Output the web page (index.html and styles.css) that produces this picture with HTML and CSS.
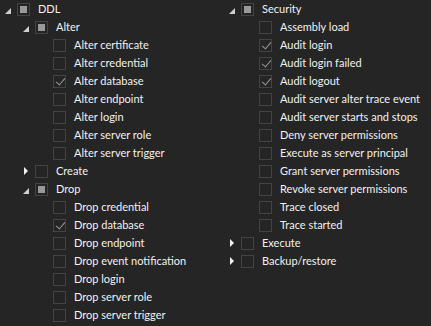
FILE: index.html
```html
<!DOCTYPE html>
<html lang="en">

<head>
    <meta charset="UTF-8">
    <title>Audit events</title>
    <link rel="stylesheet" href="styles.css">
</head>

<body>
    <div class="panel">
        <ul class="tree">
            <li>
                <div class="row"><span class="toggle open"></span><span class="box partial"></span><span class="label">DDL</span></div>
                <ul>
                    <li>
                        <div class="row"><span class="toggle open"></span><span class="box partial"></span><span class="label">Alter</span></div>
                        <ul>
                            <li class="row"><span class="toggle"></span><span class="box"></span><span class="label">Alter certificate</span></li>
                            <li class="row"><span class="toggle"></span><span class="box"></span><span class="label">Alter credential</span></li>
                            <li class="row"><span class="toggle"></span><span class="box checked"></span><span class="label">Alter database</span></li>
                            <li class="row"><span class="toggle"></span><span class="box"></span><span class="label">Alter endpoint</span></li>
                            <li class="row"><span class="toggle"></span><span class="box"></span><span class="label">Alter login</span></li>
                            <li class="row"><span class="toggle"></span><span class="box"></span><span class="label">Alter server role</span></li>
                            <li class="row"><span class="toggle"></span><span class="box"></span><span class="label">Alter server trigger</span></li>
                        </ul>
                    </li>
                    <li class="row"><span class="toggle closed"></span><span class="box"></span><span class="label">Create</span></li>
                    <li>
                        <div class="row"><span class="toggle open"></span><span class="box partial"></span><span class="label">Drop</span></div>
                        <ul>
                            <li class="row"><span class="toggle"></span><span class="box"></span><span class="label">Drop credential</span></li>
                            <li class="row"><span class="toggle"></span><span class="box checked"></span><span class="label">Drop database</span></li>
                            <li class="row"><span class="toggle"></span><span class="box"></span><span class="label">Drop endpoint</span></li>
                            <li class="row"><span class="toggle"></span><span class="box"></span><span class="label">Drop event notification</span></li>
                            <li class="row"><span class="toggle"></span><span class="box"></span><span class="label">Drop login</span></li>
                            <li class="row"><span class="toggle"></span><span class="box"></span><span class="label">Drop server role</span></li>
                            <li class="row"><span class="toggle"></span><span class="box"></span><span class="label">Drop server trigger</span></li>
                        </ul>
                    </li>
                </ul>
            </li>
        </ul>

        <ul class="tree">
            <li>
                <div class="row"><span class="toggle open"></span><span class="box partial"></span><span class="label">Security</span></div>
                <ul>
                    <li class="row"><span class="toggle"></span><span class="box"></span><span class="label">Assembly load</span></li>
                    <li class="row"><span class="toggle"></span><span class="box checked"></span><span class="label">Audit login</span></li>
                    <li class="row"><span class="toggle"></span><span class="box checked"></span><span class="label">Audit login failed</span></li>
                    <li class="row"><span class="toggle"></span><span class="box checked"></span><span class="label">Audit logout</span></li>
                    <li class="row"><span class="toggle"></span><span class="box"></span><span class="label">Audit server alter trace event</span></li>
                    <li class="row"><span class="toggle"></span><span class="box"></span><span class="label">Audit server starts and stops</span></li>
                    <li class="row"><span class="toggle"></span><span class="box"></span><span class="label">Deny server permissions</span></li>
                    <li class="row"><span class="toggle"></span><span class="box"></span><span class="label">Execute as server principal</span></li>
                    <li class="row"><span class="toggle"></span><span class="box"></span><span class="label">Grant server permissions</span></li>
                    <li class="row"><span class="toggle"></span><span class="box"></span><span class="label">Revoke server permissions</span></li>
                    <li class="row"><span class="toggle"></span><span class="box"></span><span class="label">Trace closed</span></li>
                    <li class="row"><span class="toggle"></span><span class="box"></span><span class="label">Trace started</span></li>
                </ul>
            </li>
            <li class="row"><span class="toggle closed"></span><span class="box"></span><span class="label">Execute</span></li>
            <li class="row"><span class="toggle closed"></span><span class="box"></span><span class="label">Backup/restore</span></li>
        </ul>
    </div>
</body>

</html>
```

FILE: styles.css
```css
* {
    margin: 0;
    padding: 0;
    box-sizing: border-box;
}

body {
    background: #252526;
    font-family: "Segoe UI", Lato, sans-serif;
    font-size: 11px;
    color: #f1f1f1;
}

.panel {
    display: grid;
    grid-template-columns: 224px 1fr;
}

.tree,
.tree ul {
    list-style: none;
}

.tree ul {
    padding-left: 18px;
}

.row {
    display: flex;
    align-items: center;
    height: 18px;
    white-space: nowrap;
}

.toggle {
    position: relative;
    width: 17px;
    height: 18px;
    flex: none;
}

/* expanded: small corner triangle */
.toggle.open::before {
    content: "";
    position: absolute;
    left: 5px;
    top: 8px;
    border-style: solid;
    border-width: 0 0 6px 6px;
    border-color: transparent transparent #cfcfcf transparent;
}

/* collapsed: right arrow */
.toggle.closed::before {
    content: "";
    position: absolute;
    left: 6px;
    top: 5px;
    border-style: solid;
    border-width: 4px 0 4px 4px;
    border-color: transparent transparent transparent #f1f1f1;
}

.box {
    position: relative;
    width: 13px;
    height: 13px;
    flex: none;
    border: 1px solid #434346;
}

.box.partial::before {
    content: "";
    position: absolute;
    left: 2px;
    top: 2px;
    width: 7px;
    height: 7px;
    background: #999999;
}

.box.checked::before {
    content: "";
    position: absolute;
    left: 4px;
    top: 0;
    width: 4px;
    height: 8px;
    border-right: 1.5px solid #999999;
    border-bottom: 1.5px solid #999999;
    transform: rotate(40deg);
}

.label {
    margin-left: 8px;
    line-height: 18px;
}
```
